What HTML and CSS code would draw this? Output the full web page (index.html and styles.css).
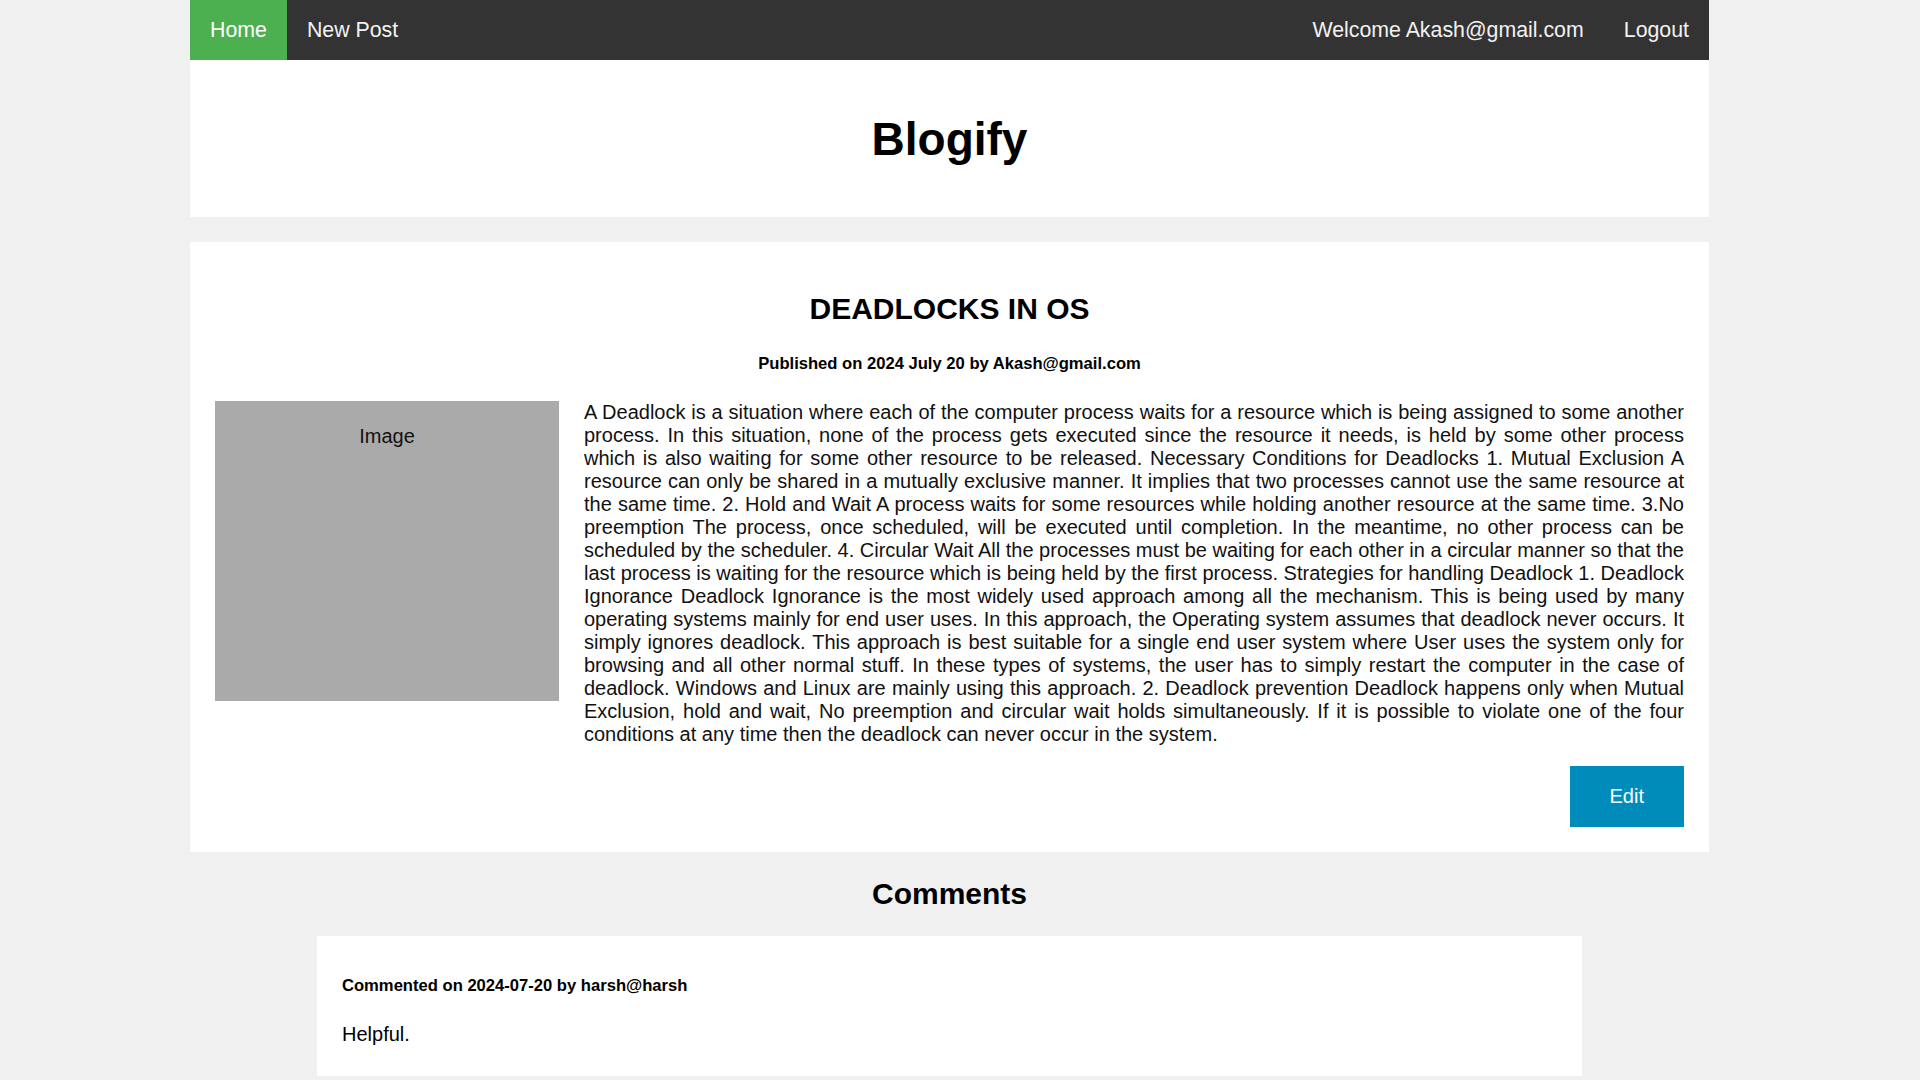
FILE: index.html
```html
<!DOCTYPE html>
<html lang="en">
<head>
<meta charset="utf-8">
<title>Blogify</title>
<link rel="stylesheet" href="styles.css">
</head>
<body>
<div class="page">
  <nav class="topnav">
    <a class="nav-link active" href="#">Home</a>
    <a class="nav-link" href="#">New Post</a>
    <div class="nav-right">
      <span class="nav-link">Welcome Akash@gmail.com</span>
      <a class="nav-link" href="#">Logout</a>
    </div>
  </nav>

  <header class="site-header">
    <h1 class="site-title">Blogify</h1>
  </header>

  <article class="post">
    <h2 class="post-title">DEADLOCKS IN OS</h2>
    <p class="post-meta">Published on 2024 July 20 by Akash@gmail.com</p>
    <div class="post-body">
      <div class="post-image">Image</div>
      <p class="post-text">A Deadlock is a situation where each of the computer process waits for a resource which is being assigned to some another process. In this situation, none of the process gets executed since the resource it needs, is held by some other process which is also waiting for some other resource to be released. Necessary Conditions for Deadlocks 1. Mutual Exclusion A resource can only be shared in a mutually exclusive manner. It implies that two processes cannot use the same resource at the same time. 2. Hold and Wait A process waits for some resources while holding another resource at the same time. 3.No preemption The process, once scheduled, will be executed until completion. In the meantime, no other process can be scheduled by the scheduler. 4. Circular Wait All the processes must be waiting for each other in a circular manner so that the last process is waiting for the resource which is being held by the first process. Strategies for handling Deadlock 1. Deadlock Ignorance Deadlock Ignorance is the most widely used approach among all the mechanism. This is being used by many operating systems mainly for end user uses. In this approach, the Operating system assumes that deadlock never occurs. It simply ignores deadlock. This approach is best suitable for a single end user system where User uses the system only for browsing and all other normal stuff. In these types of systems, the user has to simply restart the computer in the case of deadlock. Windows and Linux are mainly using this approach. 2. Deadlock prevention Deadlock happens only when Mutual Exclusion, hold and wait, No preemption and circular wait holds simultaneously. If it is possible to violate one of the four conditions at any time then the deadlock can never occur in the system.</p>
    </div>
    <div class="post-actions">
      <button class="btn-edit" type="button">Edit</button>
    </div>
  </article>

  <section class="comments">
    <h2 class="comments-title">Comments</h2>
    <div class="comment">
      <p class="comment-meta">Commented on 2024-07-20 by harsh@harsh</p>
      <p class="comment-text">Helpful.</p>
    </div>
  </section>
</div>
</body>
</html>
```

FILE: styles.css
```css
html, body {
  margin: 0;
  padding: 0;
}

body {
  background: #f0f0f0;
  font-family: "Liberation Sans", Arial, sans-serif;
  color: #000;
}

.page {
  width: 1519px;
  margin-left: 190px;
}

/* Navigation */
.topnav {
  display: flex;
  background: #333333;
  height: 60px;
}

.nav-link {
  display: block;
  padding: 0 20px;
  line-height: 60px;
  font-size: 21.33px;
  color: #f2f2f2;
  text-decoration: none;
}

.nav-link.active {
  background: #4caf50;
  color: #ffffff;
}

.nav-right {
  display: flex;
  margin-left: auto;
}

/* Header */
.site-header {
  background: #ffffff;
  height: 157px;
  display: flex;
  align-items: center;
  justify-content: center;
}

.site-title {
  margin: 0;
  font-size: 46px;
  font-weight: bold;
}

/* Post card */
.post {
  margin-top: 25px;
  background: #ffffff;
  padding: 24px 25px 25px 25px;
}

.post-title {
  margin: 26px 0 0;
  font-size: 30px;
  font-weight: bold;
  text-align: center;
}

.post-meta {
  margin: 28px 0 0;
  font-size: 16.6px;
  font-weight: bold;
  text-align: center;
}

.post-body {
  display: flex;
  gap: 25px;
  margin-top: 27px;
}

.post-image {
  flex: 0 0 344px;
  height: 276px;
  padding-top: 24px;
  background: #aaaaaa;
  font-size: 20px;
  line-height: 23px;
  text-align: center;
  color: #111;
}

.post-text {
  flex: 1;
  margin: 0;
  font-size: 20px;
  line-height: 23px;
  text-align: justify;
  color: #111;
}

.post-actions {
  display: flex;
  justify-content: flex-end;
  margin-top: 20px;
}

.btn-edit {
  border: none;
  background: #008cba;
  color: #ffffff;
  font-family: inherit;
  font-size: 20px;
  line-height: 23px;
  padding: 19px 40px;
  cursor: pointer;
}

/* Comments */
.comments {
  padding-bottom: 215px;
}

.comments-title {
  margin: 25px 0 25px;
  font-size: 30px;
  font-weight: bold;
  text-align: center;
}

.comment {
  margin: 0 127px;
  background: #ffffff;
  padding: 40px 25px 30px;
}

.comment-meta {
  margin: 0;
  font-size: 16.6px;
  font-weight: bold;
}

.comment-text {
  margin: 27px 0 0;
  font-size: 20px;
  line-height: 23px;
}
```
